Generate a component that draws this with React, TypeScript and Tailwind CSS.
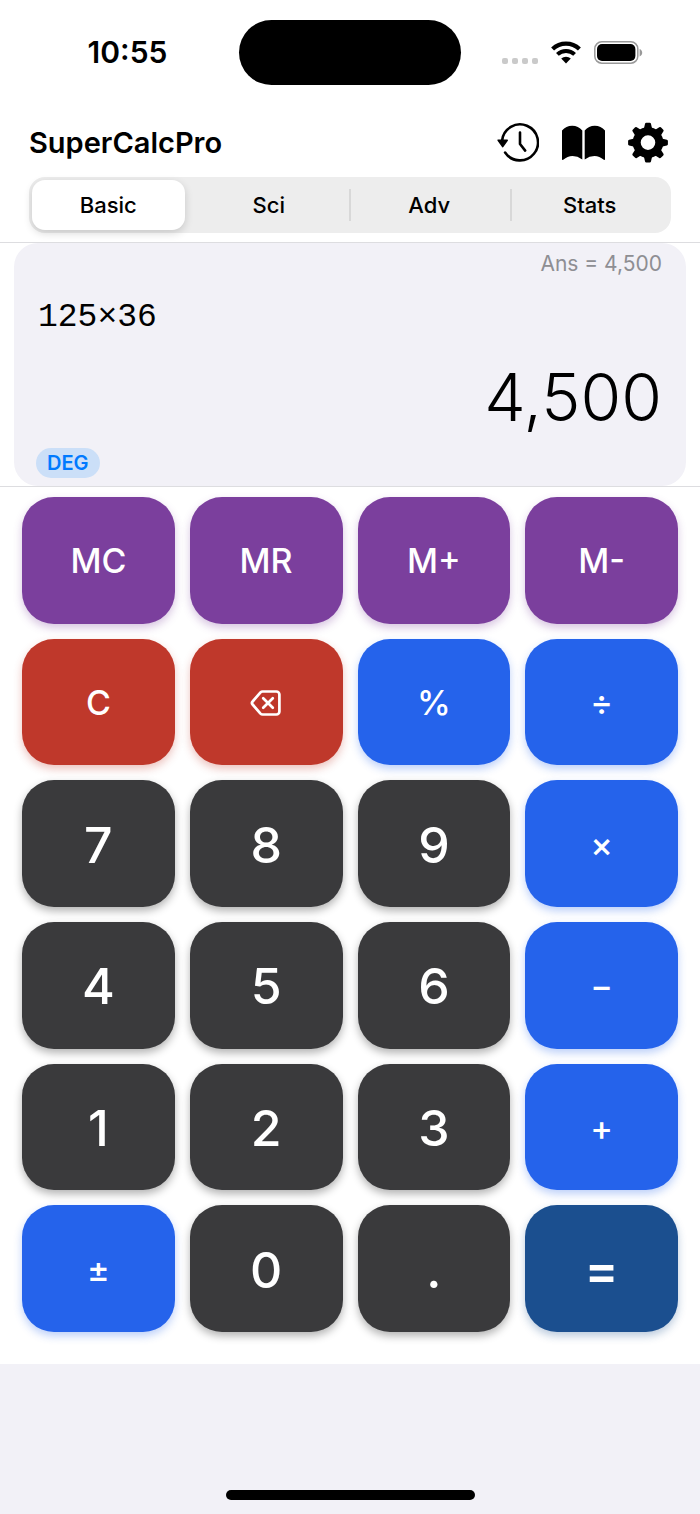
import { useState } from "react";
import type { ReactNode } from "react";
import clsx from "clsx";

type KeyVariant = "memory" | "clear" | "operator" | "digit" | "equals";

type CalcKey = {
  id: string;
  label: ReactNode;
  variant: KeyVariant;
  ariaLabel?: string;
};

const TABS = ["Basic", "Sci", "Adv", "Stats"];

const KEY_STYLES: Record<KeyVariant, string> = {
  memory:
    "bg-[#7b3f9d] text-[34px] font-medium shadow-[0_4px_8px_rgba(123,63,157,0.3)]",
  clear:
    "bg-[#bf382b] text-[34px] font-medium shadow-[0_4px_8px_rgba(191,56,43,0.3)]",
  operator:
    "bg-[#2563eb] text-[34px] font-medium shadow-[0_4px_8px_rgba(37,99,235,0.3)]",
  digit:
    "bg-[#3a3a3c] text-[50px] font-medium shadow-[0_4px_8px_rgba(0,0,0,0.3)]",
  equals:
    "bg-[#1b4f8f] text-[50px] font-semibold shadow-[0_4px_8px_rgba(27,79,143,0.3)]",
};

const KEYS: CalcKey[] = [
  { id: "mc", label: "MC", variant: "memory" },
  { id: "mr", label: "MR", variant: "memory" },
  { id: "m-plus", label: "M+", variant: "memory" },
  { id: "m-minus", label: "M-", variant: "memory" },
  { id: "clear", label: "C", variant: "clear" },
  {
    id: "delete",
    label: <DeleteIcon />,
    variant: "clear",
    ariaLabel: "Delete",
  },
  { id: "percent", label: "%", variant: "operator" },
  { id: "divide", label: "÷", variant: "operator" },
  { id: "7", label: "7", variant: "digit" },
  { id: "8", label: "8", variant: "digit" },
  { id: "9", label: "9", variant: "digit" },
  { id: "multiply", label: "×", variant: "operator" },
  { id: "4", label: "4", variant: "digit" },
  { id: "5", label: "5", variant: "digit" },
  { id: "6", label: "6", variant: "digit" },
  { id: "subtract", label: "−", variant: "operator" },
  { id: "1", label: "1", variant: "digit" },
  { id: "2", label: "2", variant: "digit" },
  { id: "3", label: "3", variant: "digit" },
  { id: "add", label: "+", variant: "operator" },
  { id: "sign", label: "±", variant: "operator" },
  { id: "0", label: "0", variant: "digit" },
  { id: "decimal", label: ".", variant: "digit" },
  { id: "equals", label: "=", variant: "equals" },
];

function DeleteIcon() {
  return (
    <svg
      width="32"
      height="28"
      viewBox="0 0 32 28"
      fill="none"
      stroke="currentColor"
      strokeWidth="2.7"
      strokeLinecap="round"
      strokeLinejoin="round"
    >
      <path d="M12.6 2.5H26.4a3 3 0 0 1 3 3V22.5a3 3 0 0 1-3 3H12.6a3 3 0 0 1-2.1-.9L2.6 15.5a2.2 2.2 0 0 1 0-3L10.5 3.4a3 3 0 0 1 2.1-.9Z" />
      <path d="M13.2 9.2l9.6 9.6M22.8 9.2l-9.6 9.6" />
    </svg>
  );
}

function WifiIcon() {
  return (
    <svg width="30" height="23" viewBox="0 0 30 23" fill="none" stroke="#000">
      <path d="M1.6 8A19.6 19.6 0 0 1 28.4 8" strokeWidth="4.3" />
      <path d="M6.4 13.4A12.6 12.6 0 0 1 23.6 13.4" strokeWidth="4" />
      <path
        d="M15 22.4L10.2 17.6A7 7 0 0 1 19.8 17.6Z"
        fill="#000"
        stroke="none"
      />
    </svg>
  );
}

function BatteryIcon() {
  return (
    <svg width="49" height="23" viewBox="0 0 49 23">
      <rect
        x="0.8"
        y="0.8"
        width="43"
        height="21.4"
        rx="7"
        fill="none"
        stroke="#999"
        strokeWidth="1.5"
      />
      <rect x="3" y="3" width="38.4" height="17" rx="5" fill="#000" />
      <path d="M45.6 8v7.4c1.6-.6 2.6-2 2.6-3.7s-1-3.1-2.6-3.7Z" fill="#999" />
    </svg>
  );
}

function HistoryIcon() {
  return (
    <svg
      width="44"
      height="42"
      viewBox="0 0 44 42"
      fill="none"
      stroke="currentColor"
      strokeWidth="2.6"
      strokeLinecap="round"
      strokeLinejoin="round"
    >
      <path d="M7.1 18.5A18 18 0 1 1 10.1 30.5" />
      <path d="M25 10.5V22L30.2 28.6" />
      <path
        d="M3.2 18.2H12.2L7.7 24.6Z"
        fill="currentColor"
        strokeWidth="1.6"
      />
    </svg>
  );
}

function BookIcon() {
  return (
    <svg width="44" height="42" viewBox="0 0 44 42" fill="currentColor">
      <path d="M1 37V8.4Q5 3.7 11.2 3.7T21.3 8.4V37.4Q16.5 34 11.5 34T2.2 37.8Q1 38.6 1 37Z" />
      <path d="M44 37V8.4Q40 3.7 33.8 3.7T23.7 8.4V37.4Q28.5 34 33.5 34T42.8 37.8Q44 38.6 44 37Z" />
    </svg>
  );
}

function GearIcon() {
  return (
    <svg width="44" height="42" viewBox="0 0 44 42" fill="none">
      <circle cx="21" cy="20.6" r="11.3" stroke="currentColor" strokeWidth="8" />
      {[0, 45, 90, 135, 180, 225, 270, 315].map((angle) => (
        <path
          key={angle}
          d="M19.3 2L22.7 2L24.2 8.5H17.8Z"
          transform={`rotate(${angle} 21 20.6)`}
          fill="currentColor"
          stroke="currentColor"
          strokeWidth="2.6"
          strokeLinejoin="round"
        />
      ))}
    </svg>
  );
}

function StatusBar() {
  return (
    <div className="flex h-[105px] items-center">
      <div className="flex-1 pl-4 text-center text-[30px] font-semibold">
        10:55
      </div>
      <div className="h-[65px] w-[222px] rounded-full bg-black" />
      <div className="flex flex-1 items-end justify-center gap-[13px] pr-4">
        <div className="flex gap-1">
          {[0, 1, 2, 3].map((dot) => (
            <span key={dot} className="size-1.5 rounded-xs bg-[#cacaca]" />
          ))}
        </div>
        <WifiIcon />
        <BatteryIcon />
      </div>
    </div>
  );
}

function ModeTabs() {
  const [active, setActive] = useState("Basic");
  const activeIndex = TABS.indexOf(active);

  return (
    <div
      role="tablist"
      className="mt-[13px] grid h-14 grid-cols-4 rounded-2xl bg-[#ededed]"
    >
      {TABS.map((tab, index) => {
        const showDivider =
          index > 0 && index !== activeIndex && index !== activeIndex + 1;
        return (
          <div key={tab} className="flex items-center">
            <span
              className={clsx(
                "-ml-px h-8 w-0.5",
                showDivider && "bg-[#d8d8d8]"
              )}
            />
            <button
              type="button"
              role="tab"
              aria-selected={tab === active}
              onClick={() => setActive(tab)}
              className={clsx(
                "mr-[5px] ml-0.5 h-[50px] flex-1 rounded-[13px] text-[22px] font-medium",
                tab === active && "bg-white shadow-[0_3px_8px_rgba(0,0,0,0.16)]"
              )}
            >
              {tab}
            </button>
          </div>
        );
      })}
    </div>
  );
}

function Display() {
  return (
    <section className="border-y border-[#dddde0]">
      <div className="mx-[14px] flex flex-col rounded-3xl bg-[#f2f1f7] px-6 pt-[9px] pb-2">
        <p className="text-right text-[21px] leading-6 text-[#8e8e93]">
          Ans = 4,500
        </p>
        <p className="mt-[21px] font-['Liberation_Mono',monospace] text-[33px] leading-[42px]">
          125×36
        </p>
        <output className="mt-[18px] text-right text-[66px] leading-[80px] font-light">
          4,500
        </output>
        <button
          type="button"
          className="mt-[11px] -ml-0.5 h-[30px] self-start rounded-full bg-[#cbdff8] px-[11px] text-[20px] font-semibold text-[#007aff]"
        >
          DEG
        </button>
      </div>
    </section>
  );
}

export default function App() {
  return (
    <div className="flex min-h-screen flex-col bg-white font-['Inter',sans-serif] text-black">
      <StatusBar />

      <header className="px-[29px] pt-[17px] pb-[9px]">
        <div className="flex items-center justify-between">
          <h1 className="text-[29px] leading-10 font-semibold">SuperCalcPro</h1>
          <div className="flex gap-[22px]">
            <button type="button" aria-label="History">
              <HistoryIcon />
            </button>
            <button type="button" aria-label="Guide">
              <BookIcon />
            </button>
            <button type="button" aria-label="Settings">
              <GearIcon />
            </button>
          </div>
        </div>
        <ModeTabs />
      </header>

      <Display />

      <main className="grid flex-1 auto-rows-fr grid-cols-4 gap-[15px] px-[22px] pt-[10px] pb-8">
        {KEYS.map(({ id, label, variant, ariaLabel }) => (
          <button
            key={id}
            type="button"
            aria-label={ariaLabel}
            className={clsx(
              "flex items-center justify-center rounded-[32px] pt-0.5 leading-none text-white",
              KEY_STYLES[variant]
            )}
          >
            {label}
          </button>
        ))}
      </main>

      <footer className="flex h-[150px] items-end justify-center bg-[#f2f1f7] pb-[14px]">
        <div className="h-[10px] w-[249px] rounded-full bg-black" />
      </footer>
    </div>
  );
}
